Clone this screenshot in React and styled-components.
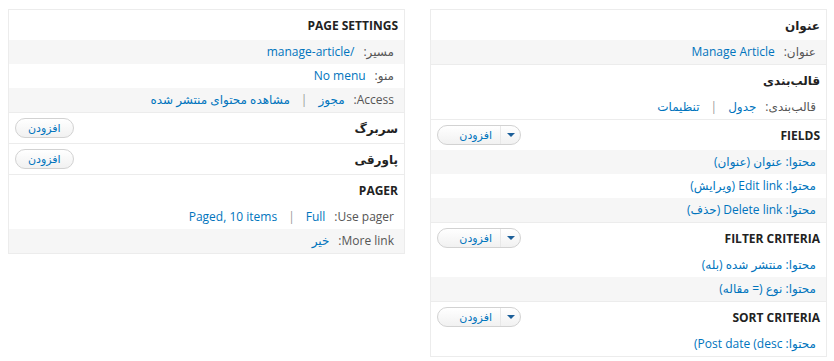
import React from 'react';
import styled, { createGlobalStyle } from 'styled-components';

const GlobalStyle = createGlobalStyle`
  body {
    margin: 0;
    background: #fff;
    font-family: "Open Sans", "DejaVu Sans", sans-serif;
    font-size: 12px;
  }
`;

const Page = styled.div`
  direction: rtl;
  display: grid;
  grid-template-columns: 1fr 1fr;
  column-gap: 25px;
  align-items: start;
  padding: 9px 7px 0 8px;
`;

const Column = styled.div`
  border: 1px solid #ececec;
  background: #fff;
`;

const Section = styled.div`
  & + & {
    border-top: 1px solid #ececec;
  }
`;

const Header = styled.div`
  display: flex;
  align-items: center;
  justify-content: space-between;
  height: 30px;
  padding: 0 6px;
  font-weight: bold;
  color: #222;
`;

const Row = styled.div`
  height: 24px;
  line-height: 24px;
  padding: 0 10px;
  white-space: nowrap;
  color: #555;
  background: ${p => (p.$shaded ? '#f6f6f6' : '#fff')};
`;

const Label = styled.span`
  display: inline-block;
  color: #555;
  margin-left: 9px;
`;

const Link = styled.a`
  display: inline-block;
  color: #0074bd;
  text-decoration: none;
  cursor: pointer;
`;

/* keeps a closing bracket out of bracket pairing, as older bidi did */
const Iso = styled.span`
  unicode-bidi: isolate;
`;

const Sep = styled.span`
  display: inline-block;
  color: #999;
  margin: 0 11px;
`;

const AddButton = styled.button`
  height: 20px;
  padding: 0 12px 1px;
  border: 1px solid #d2d2d2;
  border-radius: 10px;
  background: linear-gradient(#fff, #f1f1f1);
  color: #0074bd;
  font-family: "Open Sans", "DejaVu Sans", sans-serif;
  font-size: 11px;
  line-height: 16px;
  cursor: pointer;
`;

const DropButton = styled.div`
  display: flex;
  width: 84px;
  height: 20px;
  box-sizing: border-box;
  border: 1px solid #d2d2d2;
  border-radius: 10px;
  background: linear-gradient(#fff, #f1f1f1);
  overflow: hidden;
`;

const DropToggle = styled.span`
  width: 19px;
  display: flex;
  align-items: center;
  justify-content: center;
  border-left: 1px solid #e8e8e8;

  &::after {
    content: '';
    border-top: 4px solid #1c5f99;
    border-left: 4px solid transparent;
    border-right: 4px solid transparent;
  }
`;

const DropAction = styled.a`
  flex: 1;
  padding-right: 8px;
  color: #0074bd;
  font-weight: normal;
  font-size: 11px;
  line-height: 17px;
  text-align: right;
  cursor: pointer;
`;

const lbl = text => ({ kind: 'label', text });
const lnk = text => ({ kind: 'link', text });
const sep = { kind: 'sep', text: '|' };

const rightSections = [
  { title: 'عنوان', rows: [[lbl('عنوان:'), lnk('Manage Article')]] },
  { title: 'قالب\u200cبندی', rows: [[lbl('قالب\u200cبندی:'), lnk('جدول'), sep, lnk('تنظیمات')]] },
  {
    title: 'FIELDS',
    action: 'drop',
    rows: [
      [lnk('محتوا: عنوان (عنوان)')],
      [lnk('محتوا: Edit link (ویرایش)')],
      [lnk('محتوا: Delete link (حذف)')],
    ],
  },
  {
    title: 'FILTER CRITERIA',
    action: 'drop',
    rows: [[lnk('محتوا: منتشر شده (بله)')], [lnk('محتوا: نوع (= مقاله)')]],
  },
  {
    title: 'SORT CRITERIA',
    action: 'drop',
    rows: [[lnk(<>محتوا: Post date (desc<Iso>)</Iso></>)]],
  },
];

const leftSections = [
  {
    title: 'PAGE SETTINGS',
    rows: [
      [lbl('مسیر:'), lnk('/manage-article')],
      [lbl('منو:'), lnk('No menu')],
      [lbl('Access:'), lnk('مجوز'), sep, lnk('مشاهده محتوای منتشر شده')],
    ],
  },
  { title: 'سربرگ', action: 'add', rows: [] },
  { title: 'پاورقی', action: 'add', rows: [] },
  {
    title: 'PAGER',
    rows: [
      [lbl('Use pager:'), lnk('Full'), sep, lnk('Paged, 10 items')],
      [lbl('More link:'), lnk('خیر')],
    ],
  },
];

const Part = ({ part }) => {
  if (part.kind === 'label') return <Label>{part.text}</Label>;
  if (part.kind === 'sep') return <Sep>{part.text}</Sep>;
  return <Link>{part.text}</Link>;
};

const Bucket = ({ sections }) => {
  let count = 0;
  return (
    <Column>
      {sections.map(section => (
        <Section key={section.title}>
          <Header>
            <span>{section.title}</span>
            {section.action === 'add' && <AddButton>افزودن</AddButton>}
            {section.action === 'drop' && (
              <DropButton>
                <DropToggle />
                <DropAction>افزودن</DropAction>
              </DropButton>
            )}
          </Header>
          {section.rows.map((row, i) => {
            count += 1;
            return (
              <Row key={i} $shaded={count % 2 === 1}>
                {row.map((part, j) => (
                  <Part key={j} part={part} />
                ))}
              </Row>
            );
          })}
        </Section>
      ))}
    </Column>
  );
};

export default function App() {
  return (
    <>
      <GlobalStyle />
      <Page>
        <Bucket sections={rightSections} />
        <Bucket sections={leftSections} />
      </Page>
    </>
  );
}
